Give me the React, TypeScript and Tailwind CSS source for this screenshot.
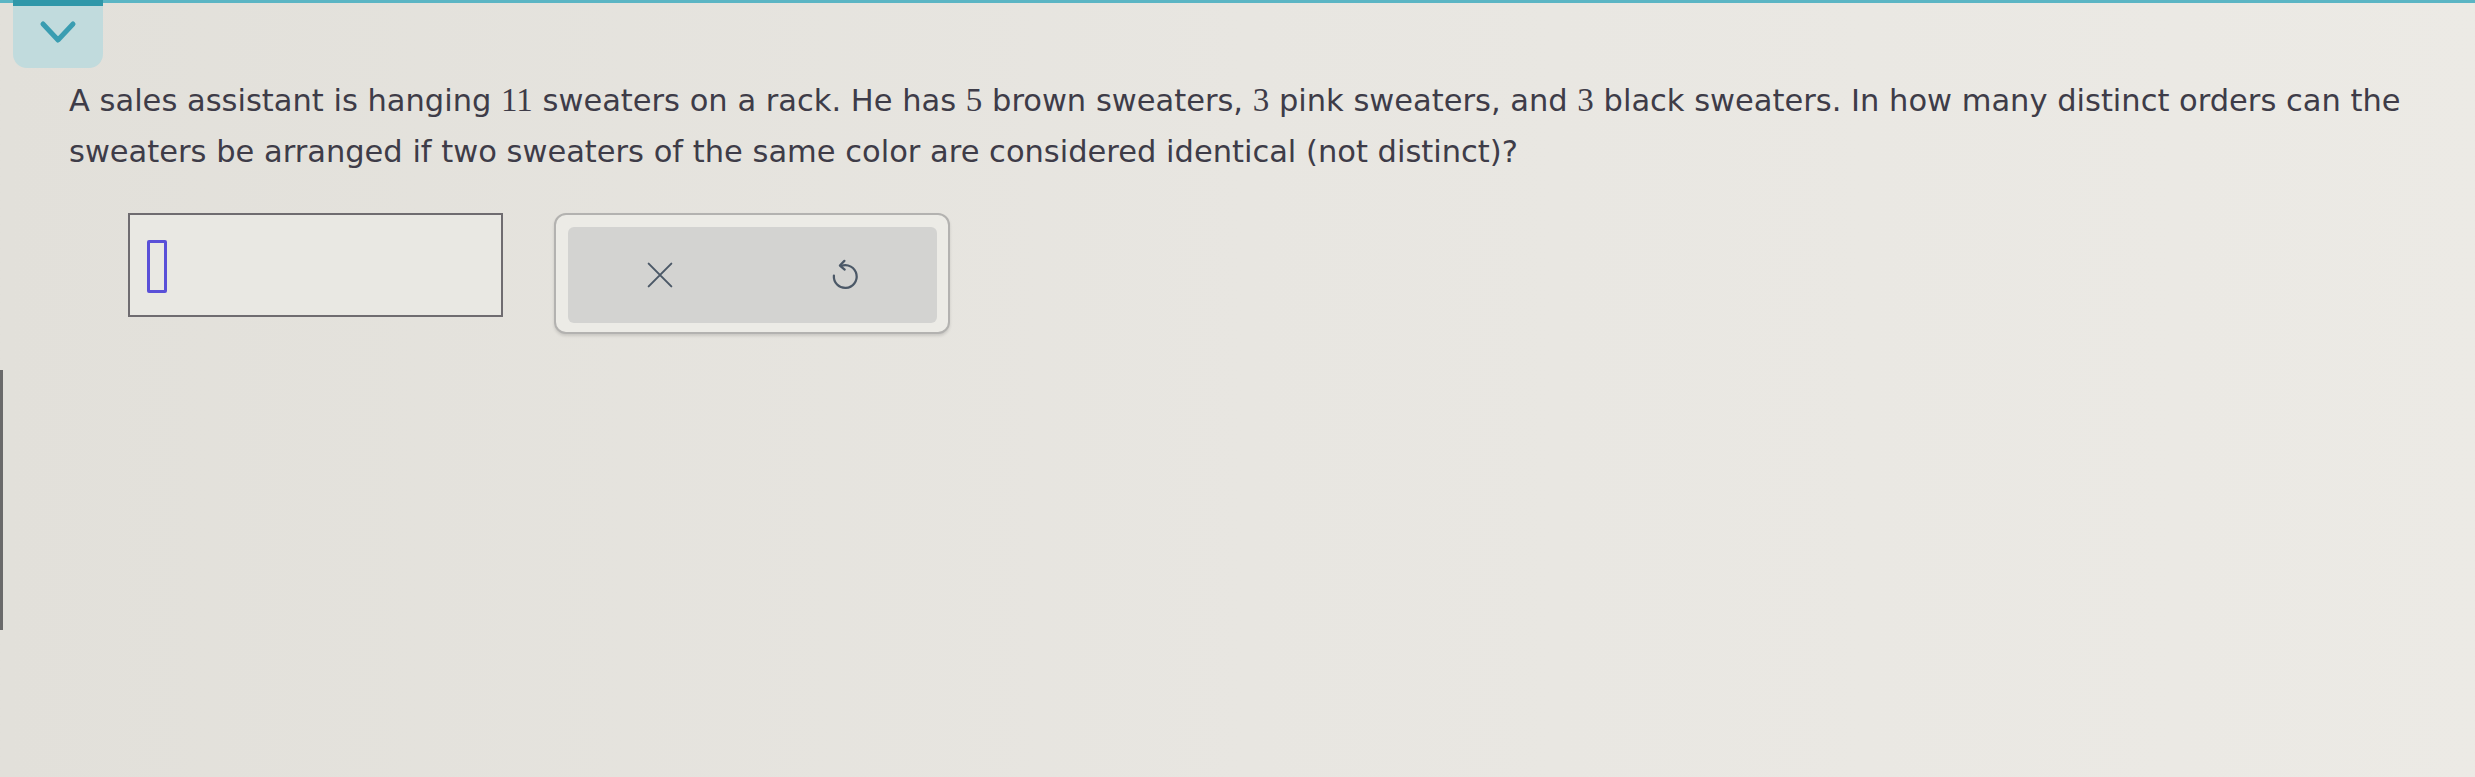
const serif = { fontFamily: '"Liberation Serif", serif' };

function Num({ children }: { children: React.ReactNode }) {
  return (
    <span className="text-[33px]" style={serif}>
      {children}
    </span>
  );
}

function UndoIcon() {
  return (
    <svg width="36" height="36" viewBox="0 0 24 24" fill="none" stroke="#4b5867" strokeWidth="1.5" strokeLinecap="round" strokeLinejoin="round">
      <path d="M9.6 5.9 A7.6 7.6 0 1 1 4.6 12.4" />
      <path d="M11.6 2.6 L8.6 5.7 L11.8 8.4" />
    </svg>
  );
}

export default function App() {
  return (
    <div className="w-[2475px] h-[777px] overflow-hidden bg-linear-to-r from-[#e2e0da] via-[#e8e6e1] to-[#eceae5] relative">
      {/* top accent line */}
      <div className="h-[3px] bg-[#5bb5c4]" />

      {/* collapse tab */}
      <div className="ml-[13px] -mt-[3px] w-[90px] h-[68px] bg-[#c1dbdd] rounded-b-[14px] flex flex-col">
        <div className="h-[6px] bg-[#2f97a9]" />
        <div className="flex-1 flex items-center justify-center pb-[8px]">
          <svg width="40" height="26" viewBox="0 0 40 26" fill="none" stroke="#3a9db1" strokeWidth="5" strokeLinecap="round" strokeLinejoin="round">
            <path d="M5 4 L20 20 L35 4" />
          </svg>
        </div>
      </div>

      {/* question */}
      <p
        className="ml-[69px] mt-[7px] text-[30.5px] leading-[51px] text-[#3e3c48] whitespace-nowrap"
        style={{ fontFamily: '"DejaVu Sans", Verdana, sans-serif' }}
      >
        A sales assistant is hanging <Num>11</Num> sweaters on a rack. He has <Num>5</Num> brown sweaters, <Num>3</Num> pink sweaters, and <Num>3</Num> black sweaters. In how many distinct orders can the
        <br />
        sweaters be arranged if two sweaters of the same color are considered identical (not distinct)?
      </p>

      {/* answer row */}
      <div className="flex items-start gap-[51px] ml-[128px] mt-[36px]">
        <div className="w-[375px] h-[104px] border-2 border-[#6f6c70] bg-[#e9e8e3] pl-[17px] pt-[25px]">
          <div className="w-[20px] h-[53px] border-[3px] border-[#5a50d8] rounded-[2px]" />
        </div>

        <div className="w-[396px] h-[121px] border-2 border-[#b3b2b0] rounded-[12px] bg-[#ecebe6] pl-[12px] pr-[11px] pt-[12px] pb-[9px] shadow-[0_2px_3px_rgba(0,0,0,0.12)]">
          <div className="h-full bg-[#d3d3d1] rounded-[6px] flex">
            <div className="flex-1 flex items-center justify-center">
              <svg width="32" height="32" viewBox="0 0 24 24" fill="none" stroke="#4b5867" strokeWidth="1.5" strokeLinecap="round">
                <path d="M3.5 3.5 L20.5 20.5 M20.5 3.5 L3.5 20.5" />
              </svg>
            </div>
            <div className="flex-1 flex items-center justify-center">
              <UndoIcon />
            </div>
          </div>
        </div>
      </div>

      {/* left edge of screen */}
      <div className="absolute left-0 top-[370px] w-[3px] h-[260px] bg-[#6a6a6a]" />
    </div>
  );
}
